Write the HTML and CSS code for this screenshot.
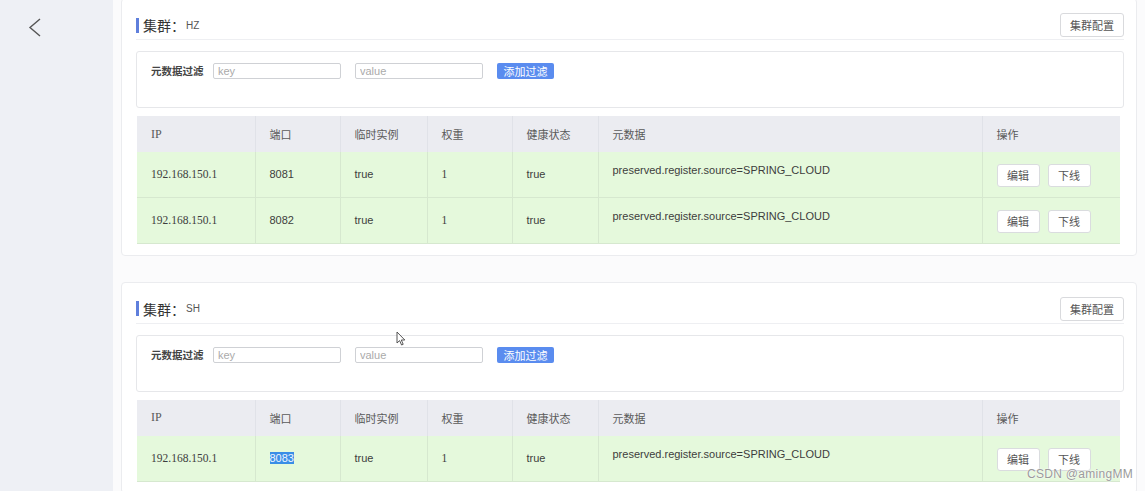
FILE: index.html
```html
<!DOCTYPE html>
<html lang="zh">
<head>
<meta charset="utf-8">
<link rel="stylesheet" href="styles.css">
</head>
<body>
<aside class="sidebar">
  <svg class="back" width="20" height="24" viewBox="0 0 20 24"><path d="M13 3 L3 11.5 L13 20" fill="none" stroke="#555" stroke-width="1.4"/></svg>
</aside>
<main class="main">
  <section class="card first">
    <div class="card-head">
      <div class="title"><span class="bar"></span><span class="t-main">集群：</span><span class="t-sub">HZ</span></div>
      <button class="btn">集群配置</button>
    </div>
    <div class="filter">
      <span class="f-label">元数据过滤</span>
      <input class="f-input" placeholder="key">
      <input class="f-input" placeholder="value">
      <button class="f-btn">添加过滤</button>
    </div>
    <table class="grid">
      <colgroup><col class="c1"><col class="c2"><col class="c3"><col class="c4"><col class="c5"><col class="c6"><col class="c7"></colgroup>
      <thead><tr><th class="serif">IP</th><th>端口</th><th>临时实例</th><th>权重</th><th>健康状态</th><th>元数据</th><th>操作</th></tr></thead>
      <tbody>
        <tr class="r45"><td class="serif">192.168.150.1</td><td>8081</td><td>true</td><td class="serif">1</td><td>true</td><td class="meta">preserved.register.source=SPRING_CLOUD</td><td class="ops"><button class="sbtn">编辑</button><button class="sbtn">下线</button></td></tr>
        <tr class="r46"><td class="serif">192.168.150.1</td><td>8082</td><td>true</td><td class="serif">1</td><td>true</td><td class="meta">preserved.register.source=SPRING_CLOUD</td><td class="ops"><button class="sbtn">编辑</button><button class="sbtn">下线</button></td></tr>
      </tbody>
    </table>
  </section>
  <section class="card">
    <div class="card-head">
      <div class="title"><span class="bar"></span><span class="t-main">集群：</span><span class="t-sub">SH</span></div>
      <button class="btn">集群配置</button>
    </div>
    <div class="filter">
      <span class="f-label">元数据过滤</span>
      <input class="f-input" placeholder="key">
      <input class="f-input" placeholder="value">
      <button class="f-btn">添加过滤</button>
    </div>
    <table class="grid">
      <colgroup><col class="c1"><col class="c2"><col class="c3"><col class="c4"><col class="c5"><col class="c6"><col class="c7"></colgroup>
      <thead><tr><th class="serif">IP</th><th>端口</th><th>临时实例</th><th>权重</th><th>健康状态</th><th>元数据</th><th>操作</th></tr></thead>
      <tbody>
        <tr class="r46"><td class="serif">192.168.150.1</td><td><span class="sel">8083</span></td><td>true</td><td class="serif">1</td><td>true</td><td class="meta">preserved.register.source=SPRING_CLOUD</td><td class="ops"><button class="sbtn">编辑</button><button class="sbtn">下线</button></td></tr>
      </tbody>
    </table>
  </section>
</main>
<svg class="cursor" width="12" height="16" viewBox="0 0 12 16"><path d="M1 1 L1 12 L3.6 9.6 L5.6 14 L7.2 13.3 L5.3 9 L8.8 9 Z" fill="#fff" stroke="#444" stroke-width="0.9"/></svg>
<div class="watermark">CSDN @amingMM</div>
</body>
</html>
```
FILE: styles.css
```css
* { box-sizing: border-box; }
html, body { margin: 0; padding: 0; }
body {
  display: flex;
  width: 1145px;
  height: 491px;
  overflow: hidden;
  font-family: "Liberation Sans", "Noto Sans CJK SC", sans-serif;
  color: #444;
  background: #fbfbfc;
  position: relative;
}
.sidebar {
  width: 113px;
  flex: 0 0 113px;
  background: #eef0f5;
  position: relative;
}
.back { display: block; margin: 16px 0 0 27px; }
.main {
  flex: 1;
  padding: 0 8px;
  display: flex;
  flex-direction: column;
}
.card {
  background: #fff;
  border: 1px solid #ebecef;
  border-radius: 4px;
  padding: 14px 12px 11px 14px;
  margin-top: 26px;
}
.card.first { margin-top: -2px; }
.card-head {
  display: flex;
  justify-content: space-between;
  align-items: flex-start;
  height: 27px;
  padding-bottom: 2px;
  border-bottom: 1px solid #eeeff2;
}
.title { display: flex; align-items: center; height: 24px; }
.bar { width: 3px; height: 15px; background: #5f7fdc; margin-right: 4px; }
.t-main { font-size: 14px; color: #333; font-family: "Noto Sans CJK SC", sans-serif; }
.t-sub { font-size: 10px; color: #555; margin-left: 1px; }
.btn {
  width: 64px; height: 24px;
  background: #fff;
  border: 1px solid #d9dadd;
  border-radius: 3px;
  font: 11px "Noto Sans CJK SC", sans-serif;
  color: #555;
  padding: 0;
}
.filter {
  margin-top: 11px;
  height: 57px;
  border: 1px solid #e6e7ea;
  border-radius: 3px;
  padding: 11px 14px 0;
  display: flex;
  align-items: flex-start;
  gap: 14px;
}
.f-label {
  font: 600 10.5px/16px "Noto Sans CJK SC", sans-serif;
  color: #444;
  width: 52px;
  white-space: nowrap;
  margin-right: -4px;
}
.f-input {
  width: 128px; height: 16px;
  border: 1px solid #cfd1d5;
  border-radius: 2px;
  padding: 0 4px;
  font: 11px "Liberation Sans", sans-serif;
  color: #444;
  outline: none;
}
.f-input::placeholder { color: #aaa; }
.f-btn {
  width: 57px; height: 16px;
  border: 0; border-radius: 2px;
  background: #5a8cef;
  color: #fff;
  font: 11px/16px "Noto Sans CJK SC", sans-serif;
  padding: 0;
}
.grid {
  margin: 8px 4px 0 1px;
  width: 983px;
  border-collapse: collapse;
  table-layout: fixed;
  font-size: 11px;
}
.c1 { width: 118px; } .c2 { width: 85px; } .c3 { width: 87px; } .c4 { width: 85px; }
.c5 { width: 86px; } .c6 { width: 384px; } .c7 { width: 138px; }
.grid th {
  height: 36px;
  background: #ebecf1;
  text-align: left;
  font-weight: normal;
  font-family: "Noto Sans CJK SC", sans-serif;
  color: #5a5a5a;
  padding: 0 0 0 14px;
  border-right: 1px solid #e0e2e8;
}
.grid th.serif { font-family: "Liberation Serif", serif; font-size: 12px; }
.grid th:last-child, .grid td:last-child { border-right: 0; }
.grid td {
  background: #e5f9dc;
  padding: 0 0 0 14px;
  color: #3d3d3d;
  border-right: 1px solid #d6e8cf;
  border-bottom: 1px solid #d6e8cf;
  vertical-align: middle;
  white-space: nowrap;
}
.grid td.serif { font-family: "Liberation Serif", serif; font-size: 11.5px; }
.r45 td { height: 45px; }
.r46 td { height: 46px; }
.grid td.meta { vertical-align: top; padding-top: 12px; }
.grid td.ops { padding-top: 2px; }
.sbtn {
  width: 43px; height: 23px;
  background: #fff;
  border: 1px solid #dadcdf;
  border-radius: 3px;
  font: 11px "Noto Sans CJK SC", sans-serif;
  color: #555;
  padding: 0;
  margin-right: 8px;
}
.sel { background: #3a8ee6; color: #eef5ff; }
.cursor { position: absolute; left: 396px; top: 331px; }
.watermark {
  position: absolute;
  left: 1027px; top: 467px;
  font: 12px "Liberation Sans", sans-serif;
  color: #9a9a9a;
  text-shadow: 0 0 2px #fff, 0 0 1px #fff;
  letter-spacing: 0.3px;
}
```
